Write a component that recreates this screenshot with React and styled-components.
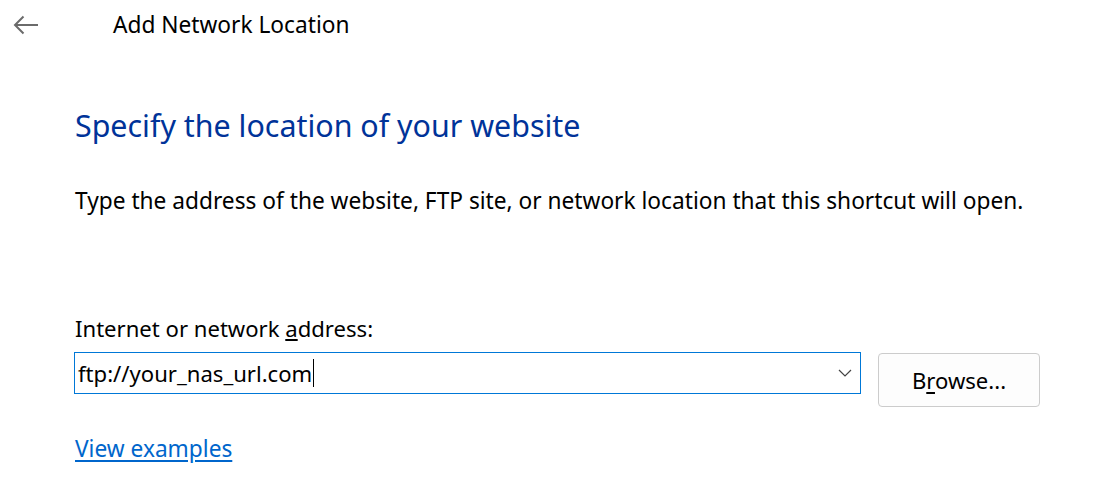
import React from 'react';
import styled, { createGlobalStyle } from 'styled-components';

const GlobalStyle = createGlobalStyle`
  html, body {
    margin: 0;
    padding: 0;
    background: #ffffff;
  }
  body {
    font-family: "Noto Sans", "Open Sans", sans-serif;
    color: #000000;
  }
`;

const Page = styled.div`
  width: 1103px;
  height: 481px;
  overflow: hidden;
  background: #ffffff;
`;

const TitleBar = styled.div`
  display: flex;
  align-items: center;
  height: 50px;
`;

const BackButton = styled.div`
  width: 52px;
  height: 50px;
  display: flex;
  align-items: center;
  justify-content: center;
  margin-right: 61px;
  color: #6b6b6b;
`;

const WindowTitle = styled.div`
  font-size: 22.7px;
  color: #000000;
  margin-top: -1px;
`;

const Content = styled.div`
  padding: 56px 0 0 75px;
`;

const Heading = styled.h1`
  margin: 0;
  font-size: 30.4px;
  font-weight: 400;
  color: #003399;
  line-height: 40px;
`;

const Body = styled.p`
  margin: 40px 0 0 0;
  font-size: 22.7px;
  line-height: 30px;
`;

const Label = styled.div`
  margin-top: 97px;
  font-size: 22.1px;
  line-height: 30px;
`;

const Row = styled.div`
  display: flex;
  align-items: flex-start;
  margin-top: 9px;
`;

const Combo = styled.div`
  width: 785px;
  height: 40px;
  border: 1px solid #0078d7;
  display: flex;
  align-items: center;
  margin-left: -1px;
`;

const ComboText = styled.div`
  flex: 1;
  font-size: 22.1px;
  padding-left: 3px;
  display: flex;
  align-items: center;
`;

const Caret = styled.span`
  display: inline-block;
  width: 1px;
  height: 28px;
  background: #000000;
  margin-left: 1px;
`;

const Chevron = styled.div`
  width: 30px;
  display: flex;
  align-items: center;
  justify-content: center;
  color: #444444;
`;

const Button = styled.button`
  margin-left: 17px;
  margin-top: 1px;
  width: 162px;
  height: 54px;
  border: 1px solid #cccccc;
  border-radius: 4px;
  background: #fdfdfd;
  font-family: inherit;
  font-size: 22.1px;
  color: #000000;
  padding: 0;
  u {
    text-decoration: underline;
    text-underline-offset: 3px;
  }
`;

const Link = styled.a`
  display: inline-block;
  margin-top: 27px;
  font-size: 22.7px;
  line-height: 30px;
  color: #0066cc;
  text-decoration: underline;
  text-underline-offset: 3px;
`;

export default function App() {
  return (
    <Page>
      <GlobalStyle />
      <TitleBar>
        <BackButton>
          <svg width="26" height="20" viewBox="0 0 26 20" fill="none" stroke="currentColor" strokeWidth="2">
            <path d="M25 10H2" />
            <path d="M10.5 1.5L2 10l8.5 8.5" />
          </svg>
        </BackButton>
        <WindowTitle>Add Network Location</WindowTitle>
      </TitleBar>
      <Content>
        <Heading>Specify the location of your website</Heading>
        <Body>Type the address of the website, FTP site, or network location that this shortcut will open.</Body>
        <Label>Internet or network <u>a</u>ddress:</Label>
        <Row>
          <Combo>
            <ComboText>ftp://your_nas_url.com<Caret /></ComboText>
            <Chevron>
              <svg width="14" height="8" viewBox="0 0 14 8" fill="none" stroke="currentColor" strokeWidth="1.2">
                <path d="M1 1l6 6 6-6" />
              </svg>
            </Chevron>
          </Combo>
          <Button>B<u>r</u>owse...</Button>
        </Row>
        <Link href="#">View examples</Link>
      </Content>
    </Page>
  );
}
